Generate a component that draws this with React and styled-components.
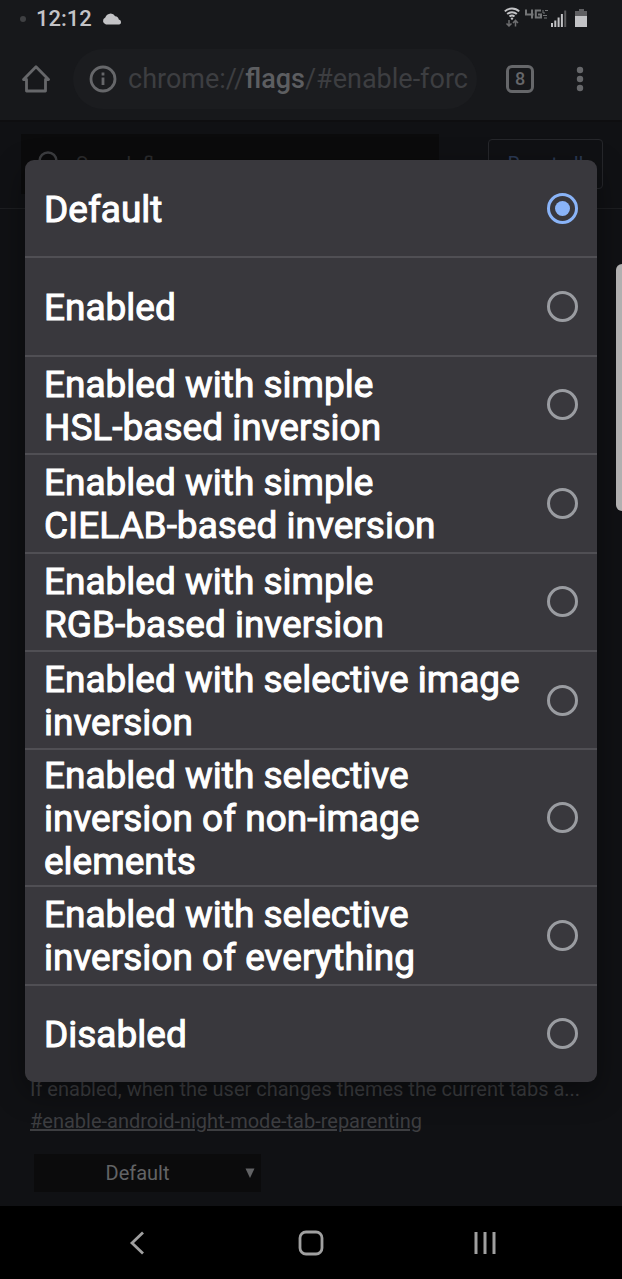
import React, { useState } from 'react'
import styled, { createGlobalStyle } from 'styled-components'

const Colors = {
  bar: '#17181b',
  pill: '#1b1c1f',
  page: '#101114',
  field: '#0b0b0c',
  line: '#1d1e21',
  dialog: '#39383d',
  divider: '#504f54',
  blue: '#8ab4f8',
  ring: '#9a9ca1',
  muted: '#3d3e41',
  icon: '#66676a',
  status: '#c3c3c6',
}

const GlobalStyle = createGlobalStyle`
  * { box-sizing: border-box; }
  body {
    margin: 0;
    background: ${Colors.page};
    font-family: Roboto, 'Liberation Sans', sans-serif;
  }
  button, input, select { font-family: inherit; }
`

const Screen = styled.div`
  position: relative;
  display: flex;
  flex-direction: column;
  min-height: 100vh;
`

const StatusBar = styled.header`
  display: flex;
  align-items: center;
  justify-content: space-between;
  height: 38px;
  padding: 0 32px 0 20px;
  background: ${Colors.bar};
  color: ${Colors.status};
`

const StatusGroup = styled.div`
  display: flex;
  align-items: center;
  gap: 10px;
  svg { display: block; }
`

const StatusIcons = styled(StatusGroup)`
  gap: 2px;
  padding-bottom: 4px;
`

const Dot = styled.span`
  width: 6px;
  height: 6px;
  border-radius: 50%;
  background: #3f4043;
`

const Clock = styled.span`
  font-size: 22px;
  font-weight: 500;
  line-height: 36px;
`

const Toolbar = styled.nav`
  display: flex;
  align-items: center;
  height: 84px;
  padding: 0 22px 0 16px;
  background: ${Colors.bar};
  border-bottom: 2px solid #0e0e10;
`

const IconButton = styled.button`
  display: flex;
  align-items: center;
  justify-content: center;
  flex: none;
  width: 40px;
  height: 60px;
  padding: 0;
  border: 0;
  background: none;
  color: ${Colors.icon};
`

const AddressBar = styled.button`
  display: flex;
  align-items: center;
  flex: 1;
  min-width: 0;
  gap: 11px;
  height: 60px;
  margin: 0 23px 0 17px;
  padding: 0 0 0 16px;
  border: 0;
  border-radius: 30px;
  background: ${Colors.pill};
  color: ${Colors.icon};
  svg { flex: none; }
`

const Url = styled.span`
  overflow: hidden;
  white-space: nowrap;
  font-size: 27px;
  line-height: 36px;
  color: ${Colors.muted};
  b {
    font-weight: 500;
    color: #5d5e61;
  }
`

const TabCount = styled.span`
  width: 28px;
  height: 28px;
  border: 3px solid ${Colors.icon};
  border-radius: 6px;
  font-size: 18px;
  font-weight: 500;
  line-height: 22px;
  text-align: center;
`

const MenuButton = styled(IconButton)`
  margin-left: 20px;
`

const Page = styled.main`
  display: flex;
  flex: 1;
  flex-direction: column;
  justify-content: space-between;
`

const SearchRow = styled.div`
  display: flex;
  align-items: center;
  justify-content: space-between;
  gap: 49px;
  height: 87px;
  padding: 0 19px 3px 21px;
  border-bottom: 1px solid ${Colors.line};
`

const SearchBox = styled.label`
  display: flex;
  align-items: center;
  flex: 1;
  gap: 14px;
  height: 60px;
  padding-left: 16px;
  background: ${Colors.field};
  color: ${Colors.muted};
`

const SearchInput = styled.input`
  flex: 1;
  min-width: 0;
  padding: 0;
  border: 0;
  background: none;
  font-size: 20px;
  color: ${Colors.muted};
  &::placeholder { color: #2b2c2e; }
`

const ResetButton = styled.button`
  width: 115px;
  height: 50px;
  padding: 0;
  border: 1px solid #26272b;
  border-radius: 4px;
  background: none;
  font-size: 20px;
  color: #2b3a55;
`

const Flag = styled.section`
  display: flex;
  flex-direction: column;
  align-items: flex-start;
  padding: 0 30px 14px;
  font-size: 20px;
  line-height: 32px;
  color: ${Colors.muted};
`

const Description = styled.p`
  max-width: 100%;
  margin: 0;
  overflow: hidden;
  white-space: nowrap;
`

const FlagLink = styled.a`
  color: ${Colors.muted};
  text-decoration: underline;
`

const SelectBox = styled.div`
  display: grid;
  align-items: center;
  width: 227px;
  margin: 17px 0 0 4px;
  background: ${Colors.field};
  color: #626365;
  > * { grid-area: 1 / 1; }
`

const FlagSelect = styled.select`
  width: 100%;
  height: 38px;
  padding: 0 20px 0 0;
  border: 0;
  border-radius: 0;
  background: none;
  appearance: none;
  font-size: 20px;
  color: inherit;
  text-align-last: center;
`

const Arrow = styled.svg`
  justify-self: end;
  margin-right: 6px;
  pointer-events: none;
`

const SystemNav = styled.footer`
  display: flex;
  align-items: center;
  justify-content: center;
  height: 73px;
  background: #000;
`

const NavButton = styled(IconButton)`
  width: 174px;
  color: #a0a0a0;
`

const EdgeHandle = styled.div`
  position: absolute;
  top: 264px;
  right: 0;
  width: 6px;
  height: 247px;
  border-radius: 6px 0 0 6px;
  background: #b1b0b0;
`

const Overlay = styled.div`
  position: absolute;
  inset: 0;
  display: flex;
  padding: 160px 25px 197px;
`

const Dialog = styled.div`
  display: flex;
  flex: 1;
  flex-direction: column;
  border-radius: 9px;
  background: ${Colors.dialog};
  box-shadow: 0 10px 30px rgba(0, 0, 0, 0.4);
`

const Option = styled.label`
  display: flex;
  flex: 1 0 92px;
  align-items: center;
  justify-content: space-between;
  gap: 16px;
  box-sizing: content-box;
  padding: 2px 19px;
  border-bottom: 2px solid ${Colors.divider};
  &:last-child { border-bottom: 0; }
`

const OptionText = styled.span`
  padding-top: 2px;
  white-space: pre-line;
  font-size: 37px;
  line-height: 43px;
  color: #fff;
  -webkit-text-stroke: 1px #fff;
`

const Radio = styled.input`
  appearance: none;
  display: grid;
  place-items: center;
  flex: none;
  width: 31px;
  height: 31px;
  margin: 0;
  border: 3px solid ${Colors.ring};
  border-radius: 50%;
  &:checked { border-color: ${Colors.blue}; }
  &:checked::before {
    content: '';
    width: 15px;
    height: 15px;
    border-radius: 50%;
    background: ${Colors.blue};
  }
`

const options = [
  'Default',
  'Enabled',
  'Enabled with simple\nHSL-based inversion',
  'Enabled with simple\nCIELAB-based inversion',
  'Enabled with simple\nRGB-based inversion',
  'Enabled with selective image inversion',
  'Enabled with selective inversion of non-image elements',
  'Enabled with selective inversion of everything',
  'Disabled',
]

function Status() {
  return (
    <StatusBar>
      <StatusGroup>
        <Dot />
        <Clock>12:12</Clock>
        <svg width="20" height="12" viewBox="0 0 20 12" fill="currentColor">
          <path d="M4 11.5A3.6 3.6 0 0 1 3.3 4.6 5.4 5.4 0 0 1 13.2 3.3 4 4 0 0 1 16.8 6.6 2.5 2.5 0 0 1 17.2 11.5Z" />
        </svg>
      </StatusGroup>
      <StatusIcons>
        <svg width="18" height="22" viewBox="0 0 18 22" fill="none" stroke="currentColor" strokeWidth="2">
          <path d="M.8 5.4a10.4 10.4 0 0 1 14.4 0M3.2 8.1a7 7 0 0 1 9.6 0M5.5 10.6a3.7 3.7 0 0 1 5 0" />
          <circle cx="8" cy="12.6" r="1.2" fill="currentColor" stroke="none" />
          <path d="M5 14v6M2.5 17.4 5 20l2.5-2.6M11.5 20.5v-6M9 17l2.5-2.6L14 17" stroke="#6e6e70" strokeWidth="1.5" />
        </svg>
        <svg width="24" height="22" viewBox="0 0 24 22" fill="none" stroke="#737476">
          <path d="M2 3.500v5h7.500M8 3.500v9M17 4.500h-5.200v7h5.200V8.500h-3" strokeWidth="2" />
          <path d="M19 4v3h2M21 4.500h3M19 9.500h4M20 12h3" strokeWidth="1" />
        </svg>
        <svg width="20" height="22" viewBox="0 0 20 22" fill="currentColor">
          <path d="M1 17h2v4H1zM4.300 14.500h2V21h-2zM7.600 11.500h2V21h-2zM10.900 8h2v13h-2z" />
          <path d="M14.200 4.500h2V21h-2z" fill="#5a5a5c" />
        </svg>
        <svg width="18" height="22" viewBox="0 0 18 22">
          <path d="M7 3h5v2h3v6H3V5h4z" fill="#5f5f62" />
          <path d="M3 10h12v11H3z" fill="currentColor" />
        </svg>
      </StatusIcons>
    </StatusBar>
  )
}

function BrowserBar() {
  return (
    <Toolbar>
      <IconButton aria-label="Home">
        <svg width="28" height="28" viewBox="0 0 28 28" fill="none" stroke="currentColor" strokeWidth="2.8" strokeLinejoin="round">
          <path d="M1.5 14.5 14 1.8 26.5 14.5H23.5V26H4.5V14.5Z" />
        </svg>
      </IconButton>
      <AddressBar>
        <svg width="28" height="28" viewBox="0 0 28 28" fill="none" stroke="currentColor" strokeWidth="2.8">
          <circle cx="14" cy="14" r="12" />
          <path d="M14 12.5V20M14 7.5v3" />
        </svg>
        <Url>chrome://<b>flags</b>/#enable-forc</Url>
      </AddressBar>
      <IconButton aria-label="Tabs">
        <TabCount>8</TabCount>
      </IconButton>
      <MenuButton aria-label="Menu">
        <svg width="8" height="26" viewBox="0 0 8 26" fill="currentColor">
          <circle cx="4" cy="4" r="3.2" />
          <circle cx="4" cy="13" r="3.2" />
          <circle cx="4" cy="22" r="3.2" />
        </svg>
      </MenuButton>
    </Toolbar>
  )
}

function FlagsPage() {
  return (
    <Page>
      <SearchRow>
        <SearchBox>
          <svg width="25" height="25" viewBox="0 0 25 25" fill="none" stroke="currentColor" strokeWidth="2.5">
            <circle cx="11" cy="10" r="8.5" />
            <path d="m17 16 7 7" />
          </svg>
          <SearchInput placeholder="Search flags" />
        </SearchBox>
        <ResetButton>Reset all</ResetButton>
      </SearchRow>
      <Flag>
        <Description>If enabled, when the user changes themes the current tabs a...</Description>
        <FlagLink href="#enable-android-night-mode-tab-reparenting">
          #enable-android-night-mode-tab-reparenting
        </FlagLink>
        <SelectBox>
          <FlagSelect aria-label="Tab reparenting" defaultValue="Default">
            <option>Default</option>
          </FlagSelect>
          <Arrow width="10" height="10" viewBox="0 0 10 10" fill="currentColor">
            <path d="M.5.5h9L5 10z" />
          </Arrow>
        </SelectBox>
      </Flag>
    </Page>
  )
}

function App() {
  const [selected, setSelected] = useState('Default')

  return (
    <Screen>
      <GlobalStyle />
      <Status />
      <BrowserBar />
      <FlagsPage />
      <SystemNav>
        <NavButton aria-label="Back">
          <svg width="24" height="26" viewBox="0 0 24 26" fill="none" stroke="currentColor" strokeWidth="2.8">
            <path d="M18 2.5 7 13l11 10.5" />
          </svg>
        </NavButton>
        <NavButton aria-label="Home screen">
          <svg width="26" height="26" viewBox="0 0 26 26" fill="none" stroke="currentColor" strokeWidth="2.8">
            <rect x="2" y="2" width="22" height="22" rx="6" />
          </svg>
        </NavButton>
        <NavButton aria-label="Recent apps">
          <svg width="24" height="26" viewBox="0 0 24 26" fill="none" stroke="currentColor" strokeWidth="3">
            <path d="M3 2v22M12 2v22M21 2v22" />
          </svg>
        </NavButton>
      </SystemNav>
      <Overlay>
        <Dialog role="radiogroup">
          {options.map(option => (
            <Option key={option}>
              <OptionText>{option}</OptionText>
              <Radio
                type="radio"
                name="flag"
                checked={selected === option}
                onChange={() => setSelected(option)}
              />
            </Option>
          ))}
        </Dialog>
      </Overlay>
      <EdgeHandle />
    </Screen>
  )
}

export default App
